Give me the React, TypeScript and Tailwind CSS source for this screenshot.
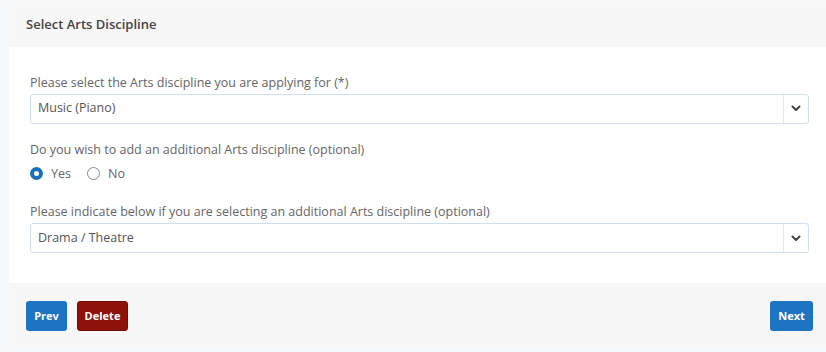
import React from "react";

function Chevron() {
  return (
    <svg width="10" height="7" viewBox="0 0 10 7" className="text-[#444]">
      <path d="M1.5 1.5 L5 5 L8.5 1.5" fill="none" stroke="currentColor" strokeWidth="2" strokeLinecap="round" strokeLinejoin="round" />
    </svg>
  );
}

function Select({ value }: { value: string }) {
  return (
    <div className="flex h-[30px] items-stretch rounded-[3px] border border-[#cfe0f2] bg-white">
      <div className="flex flex-1 items-center pl-[7px] text-[12.5px] text-[#555]">{value}</div>
      <div className="flex w-[25px] items-center justify-center border-l border-[#dde8f3]">
        <Chevron />
      </div>
    </div>
  );
}

export default function App() {
  return (
    <div className="flex h-[352px] w-[826px] bg-[#f6f9fc] pl-[9px] pt-[2px] pb-[3px] [font-family:'Open_Sans',sans-serif]">
      <div className="flex flex-1 flex-col">
        <div className="flex h-[45px] items-center bg-[#f7f7f7] pl-[17px] text-[13px] font-semibold text-[#444]">
          Select Arts Discipline
        </div>
        <div className="flex h-[236px] flex-col bg-white pl-[21px] pr-[17px] pt-[27px]">
          <div className="mb-[1px] text-[12.5px] text-[#666]">Please select the Arts discipline you are applying for (*)</div>
          <Select value="Music (Piano)" />
          <div className="mb-[5px] mt-[17px] text-[12.5px] text-[#666]">Do you wish to add an additional Arts discipline (optional)</div>
          <div className="flex items-center text-[12.5px] text-[#666]">
            <span className="flex h-[13px] w-[13px] items-center justify-center rounded-full bg-[#1a6fb8]">
              <span className="h-[5px] w-[5px] rounded-full bg-white" />
            </span>
            <span className="ml-[8px]">Yes</span>
            <span className="ml-[16px] h-[13px] w-[13px] rounded-full border border-[#888]" />
            <span className="ml-[8px]">No</span>
          </div>
          <div className="mb-[1px] mt-[20px] text-[12.5px] text-[#666]">Please indicate below if you are selecting an additional Arts discipline (optional)</div>
          <Select value="Drama / Theatre" />
        </div>
        <div className="flex flex-1 items-center justify-between bg-[#f7f7f7] pl-[17px] pr-[13px]">
          <div className="flex gap-[10px]">
            <button className="h-[30px] w-[41px] rounded-[3px] bg-[#1d74c1] text-[11px] font-bold text-white">Prev</button>
            <button className="h-[30px] w-[51px] rounded-[3px] border border-[#6e0d05] bg-[#8e1208] text-[11px] font-bold text-white">Delete</button>
          </div>
          <button className="h-[30px] w-[43px] rounded-[3px] bg-[#1d74c1] text-[11px] font-bold text-white">Next</button>
        </div>
      </div>
    </div>
  );
}
